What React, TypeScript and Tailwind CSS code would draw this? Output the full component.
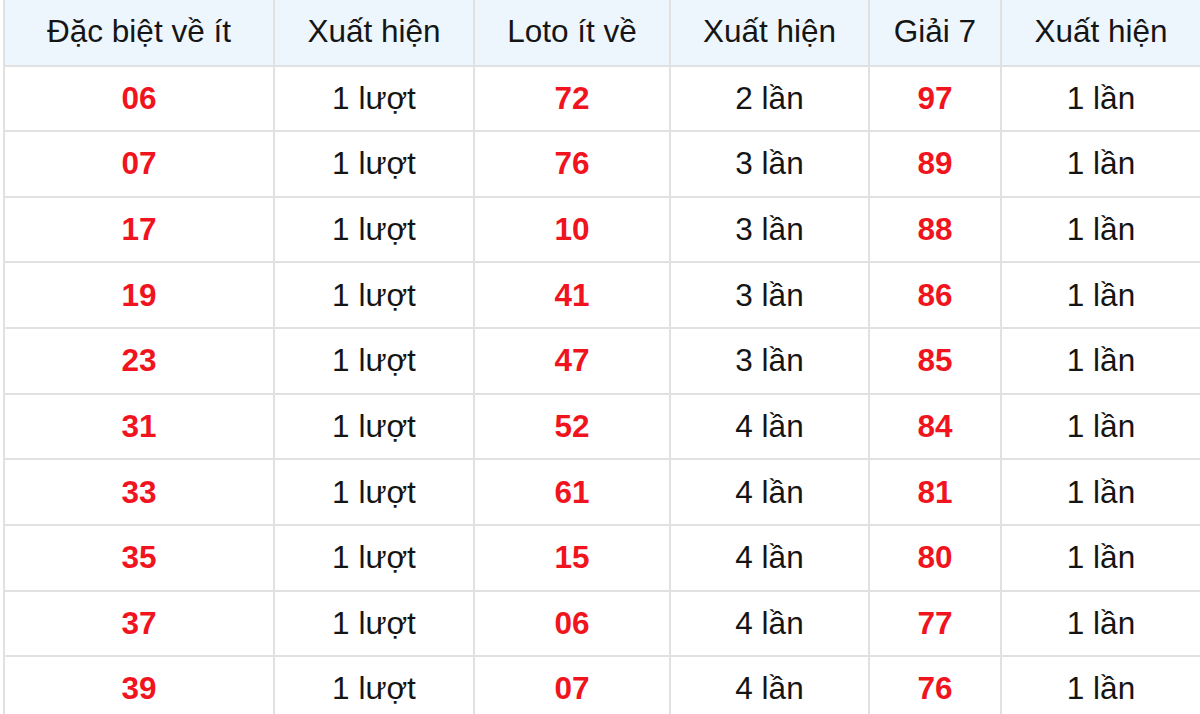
const header = ["Đặc biệt về ít", "Xuất hiện", "Loto ít về", "Xuất hiện", "Giải 7", "Xuất hiện"];

const rows: [string, string, string, string, string, string][] = [
  ["06", "1 lượt", "72", "2 lần", "97", "1 lần"],
  ["07", "1 lượt", "76", "3 lần", "89", "1 lần"],
  ["17", "1 lượt", "10", "3 lần", "88", "1 lần"],
  ["19", "1 lượt", "41", "3 lần", "86", "1 lần"],
  ["23", "1 lượt", "47", "3 lần", "85", "1 lần"],
  ["31", "1 lượt", "52", "4 lần", "84", "1 lần"],
  ["33", "1 lượt", "61", "4 lần", "81", "1 lần"],
  ["35", "1 lượt", "15", "4 lần", "80", "1 lần"],
  ["37", "1 lượt", "06", "4 lần", "77", "1 lần"],
  ["39", "1 lượt", "07", "4 lần", "76", "1 lần"],
];

const widths = ["w-[270px]", "w-[200px]", "w-[196px]", "w-[199px]", "w-[132px]", "w-[200px]"];

export default function App() {
  return (
    <div className="h-[714px] w-[1200px] overflow-hidden bg-white pl-[3px] font-['Liberation_Sans',Arial,sans-serif]">
      <table className="w-[1199px] table-fixed border-collapse text-center text-[31.5px] leading-none">
        <colgroup>
          {widths.map((w, i) => (
            <col key={i} className={w} />
          ))}
        </colgroup>
        <thead>
          <tr className="h-[65.5px] bg-[#eef6fd]">
            {header.map((h, i) => (
              <th key={i} className="border-2 border-t-0 border-[#e1e1e1] pb-[2px] font-normal text-[#151515]">
                {h}
              </th>
            ))}
          </tr>
        </thead>
        <tbody>
          {rows.map((r, ri) => (
            <tr key={ri} className="h-[65.67px]">
              {r.map((c, ci) => (
                <td
                  key={ci}
                  className={
                    "border-2 border-[#e1e1e1] " +
                    (ci % 2 === 0 ? "font-bold text-[#f0141e]" : "text-[#151515]")
                  }
                >
                  {c}
                </td>
              ))}
            </tr>
          ))}
        </tbody>
      </table>
    </div>
  );
}
